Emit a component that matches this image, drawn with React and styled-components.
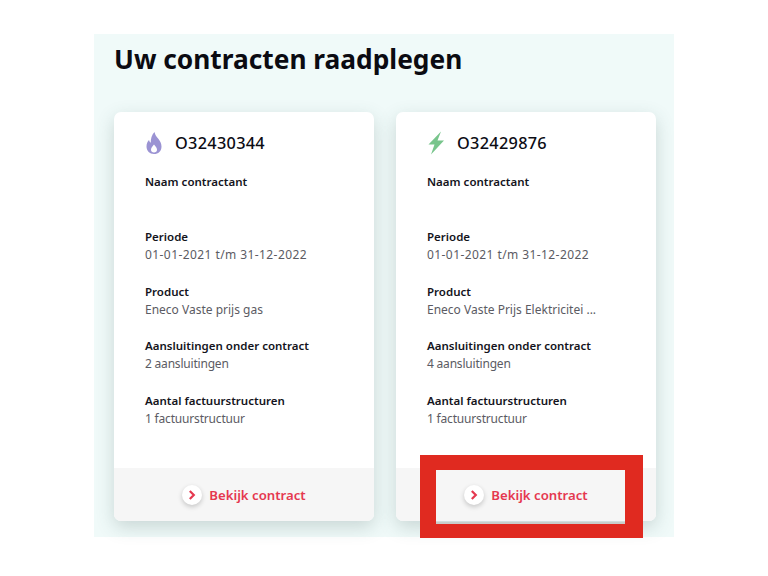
import React from 'react';
import styled, { createGlobalStyle } from 'styled-components';

const GlobalStyle = createGlobalStyle`
  html, body {
    margin: 0;
    padding: 0;
    background: #ffffff;
  }
  body {
    font-family: "Noto Sans", "Open Sans", sans-serif;
  }
`;

const Page = styled.div`
  width: 768px;
  height: 576px;
  padding: 34px 94px 0;
  box-sizing: border-box;
  overflow: hidden;
`;

const Panel = styled.section`
  width: 580px;
  height: 503px;
  box-sizing: border-box;
  padding: 7px 18px 0 20px;
  background: #f0faf9;
`;

const Title = styled.h1`
  margin: 0 0 35px;
  height: 36px;
  font-size: 26.3px;
  line-height: 36px;
  font-weight: 700;
  color: #0b0b12;
  white-space: nowrap;
`;

const Cards = styled.div`
  display: flex;
  gap: 22px;
`;

const Card = styled.article`
  position: relative;
  width: 260px;
  height: 409px;
  display: flex;
  flex-direction: column;
  border-radius: 7px;
  background: #ffffff;
  box-shadow: 0 6px 18px rgba(60, 90, 85, 0.22);
`;

const CardBody = styled.div`
  flex: 1;
  padding: 18px 20px 0 31px;
`;

const CardHead = styled.div`
  display: flex;
  align-items: center;
  gap: 12px;
  height: 26px;
  margin-bottom: 17px;
`;

const Number = styled.span`
  font-size: 16.3px;
  font-weight: 500;
  letter-spacing: 0.3px;
  color: #0c0c14;
`;

const Field = styled.div`
  height: 54.8px;
`;

const Label = styled.div`
  font-size: 11.5px;
  line-height: 18px;
  font-weight: 600;
  color: #14141c;
  white-space: nowrap;
`;

const Value = styled.div`
  font-size: 12px;
  line-height: 18px;
  letter-spacing: ${(p) => p.$spacing || 0}px;
  color: #5b5b63;
  white-space: nowrap;
`;

const Footer = styled.div`
  height: 53px;
  display: flex;
  align-items: center;
  justify-content: center;
  gap: 7px;
  border-radius: 0 0 7px 7px;
  background: #f6f6f6;
`;

const ChevronBubble = styled.span`
  width: 20px;
  height: 20px;
  display: flex;
  align-items: center;
  justify-content: center;
  border-radius: 50%;
  background: #ffffff;
  box-shadow: 0 2px 5px rgba(0, 0, 0, 0.2);
`;

const FooterLabel = styled.span`
  font-size: 13.2px;
  font-weight: 600;
  color: #e5384f;
`;

const Highlight = styled.div`
  position: absolute;
  left: 24px;
  top: 343px;
  width: 189px;
  height: 54px;
  border: 16px solid #e02a20;
  border-top-width: 15px;
  border-bottom-width: 14px;
  border-right-width: 18px;
  box-shadow: inset 0 -2px 0 #c9cdca;
`;

const Flame = () => (
  <svg width="18" height="24" viewBox="0 0 18 24">
    <path
      fillRule="evenodd"
      fill="#9b93d3"
      d="M9.500 1c.6 3.200 2 4.600 3.800 6.800 1.700 2.100 3.200 4.500 3.200 7.600C16.500 20 13.300 23 9 23S1.500 20 1.500 15.500c0-2.700 1-4.800 2.500-6.500.3 1.300.9 2.200 1.800 2.800C5.500 8 6.800 3.800 9.500 1zM9 13.500c-1.800 2-3 3.500-3 5.200C6 20.400 7.300 21.500 9 21.500s3-1.100 3-2.800c0-1.700-1.200-3.200-3-5.200z"
    />
  </svg>
);

const Bolt = () => (
  <svg width="18" height="24" viewBox="0 0 18 24">
    <path fill="#78c58c" d="M14 .5 1.500 13.500h6L4 23.500 17 9.500h-6.500L14 .5z" />
  </svg>
);

const Chevron = () => (
  <svg width="12" height="12" viewBox="0 0 12 12">
    <path d="M3.800 2 7.800 6 3.800 10" fill="none" stroke="#e5384f" strokeWidth="2.200" />
  </svg>
);

const contracts = [
  {
    id: 'O32430344',
    icon: <Flame />,
    product: 'Eneco Vaste prijs gas',
    connections: '2 aansluitingen',
  },
  {
    id: 'O32429876',
    icon: <Bolt />,
    product: 'Eneco Vaste Prijs Elektricitei ...',
    connections: '4 aansluitingen',
    highlighted: true,
  },
];

export default function App() {
  return (
    <Page>
      <GlobalStyle />
      <Panel>
        <Title>Uw contracten raadplegen</Title>
        <Cards>
          {contracts.map((c) => (
            <Card key={c.id}>
              <CardBody>
                <CardHead>
                  {c.icon}
                  <Number>{c.id}</Number>
                </CardHead>
                <Field>
                  <Label>Naam contractant</Label>
                </Field>
                <Field>
                  <Label>Periode</Label>
                  <Value $spacing={0.42}>01-01-2021 t/m 31-12-2022</Value>
                </Field>
                <Field>
                  <Label>Product</Label>
                  <Value>{c.product}</Value>
                </Field>
                <Field>
                  <Label>Aansluitingen onder contract</Label>
                  <Value $spacing={-0.2}>{c.connections}</Value>
                </Field>
                <Field>
                  <Label>Aantal factuurstructuren</Label>
                  <Value $spacing={-0.18}>1 factuurstructuur</Value>
                </Field>
              </CardBody>
              <Footer>
                <ChevronBubble>
                  <Chevron />
                </ChevronBubble>
                <FooterLabel>Bekijk contract</FooterLabel>
              </Footer>
              {c.highlighted && <Highlight />}
            </Card>
          ))}
        </Cards>
      </Panel>
    </Page>
  );
}
